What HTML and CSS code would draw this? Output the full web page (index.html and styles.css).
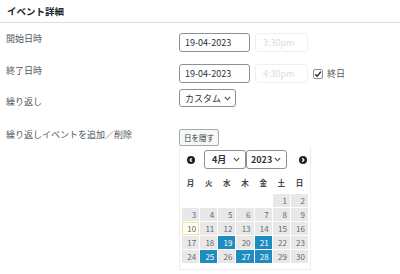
FILE: index.html
```html
<!DOCTYPE html>
<html lang="ja">
<head>
    <meta charset="UTF-8">
    <meta name="viewport" content="width=device-width, initial-scale=1.0">
    <title>イベント詳細</title>
    <link rel="stylesheet" href="styles.css">
</head>
<body>

<!-- Event details box -->
<div class="panel">
    <h2 class="panel-title">イベント詳細</h2>

    <div class="field row-start">
        <label class="field-label">開始日時</label>
        <div class="field-input">
            <input type="text" class="date-input" value="19-04-2023">
            <input type="text" class="time-input" placeholder="3:30pm" disabled>
        </div>
    </div>

    <div class="field row-end">
        <label class="field-label">終了日時</label>
        <div class="field-input">
            <input type="text" class="date-input" value="19-04-2023">
            <input type="text" class="time-input" placeholder="4:30pm" disabled>
            <span class="checkbox">
                <svg width="8" height="8" viewBox="0 0 8 8"><path d="M1.2 4.2 L3.2 6.2 L6.9 1.6" fill="none" stroke="#1d2327" stroke-width="1.3"/></svg>
            </span>
            <span class="checkbox-label">終日</span>
        </div>
    </div>

    <div class="field row-repeat">
        <label class="field-label label-repeat">繰り返し</label>
        <div class="field-input">
            <div class="select select-repeat">
                <span>カスタム</span>
                <svg class="chevron" width="7" height="5" viewBox="0 0 7 5"><path d="M0.8 1 L3.5 3.8 L6.2 1" fill="none" stroke="#50575e" stroke-width="1.1"/></svg>
            </div>
        </div>
    </div>

    <div class="field row-dates">
        <label class="field-label">繰り返しイベントを追加／削除</label>
        <div class="field-input field-stack">
            <button type="button" class="button">日を隠す</button>

            <!-- Date picker -->
            <div class="datepicker">
                <div class="dp-header">
                    <svg class="dp-nav" width="8" height="8" viewBox="0 0 8 8"><circle cx="4" cy="4" r="4" fill="#1d2327"/><path d="M4.8 2.3 L3 4 L4.8 5.7" fill="none" stroke="#fff" stroke-width="1.2"/></svg>
                    <div class="select dp-month">
                        <span>4月</span>
                        <svg class="chevron" width="7" height="5" viewBox="0 0 7 5"><path d="M0.8 1 L3.5 3.8 L6.2 1" fill="none" stroke="#50575e" stroke-width="1.1"/></svg>
                    </div>
                    <div class="select dp-year">
                        <span>2023</span>
                        <svg class="chevron" width="7" height="5" viewBox="0 0 7 5"><path d="M0.8 1 L3.5 3.8 L6.2 1" fill="none" stroke="#50575e" stroke-width="1.1"/></svg>
                    </div>
                    <svg class="dp-nav dp-next" width="8" height="8" viewBox="0 0 8 8"><circle cx="4" cy="4" r="4" fill="#1d2327"/><path d="M3.2 2.3 L5 4 L3.2 5.7" fill="none" stroke="#fff" stroke-width="1.2"/></svg>
                </div>
                <div class="dp-weekdays">
                    <span>月</span><span>火</span><span>水</span><span>木</span><span>金</span><span>土</span><span>日</span>
                </div>
                <div class="dp-days" id="dp-days"></div>
            </div>
        </div>
    </div>
</div>

<script>
    // April 2023 starts on a Saturday (Monday-first grid)
    const selected = [19, 21, 25, 27, 28];
    const today = 10;
    const days = document.getElementById('dp-days');
    let html = '';
    for (let i = 0; i < 5; i++) {
        html += '<span class="dp-empty"></span>';
    }
    for (let d = 1; d <= 30; d++) {
        let cls = 'dp-day';
        if (selected.includes(d)) cls += ' dp-selected';
        if (d === today) cls += ' dp-today';
        html += `<span class="${cls}">${d}</span>`;
    }
    days.innerHTML = html;
</script>

</body>
</html>
```

FILE: styles.css
```css
body {
    margin: 0;
    padding: 0;
    background-color: #fff;
    font-family: "Noto Sans CJK JP", "Noto Sans", sans-serif;
    font-size: 9px;
    color: #50575e;
}
.panel-title {
    margin: 0;
    height: 22px;
    line-height: 22px;
    padding-left: 7px;
    font-size: 9.5px;
    font-weight: bold;
    color: #1d2327;
    border-bottom: 1px solid #dcdcde;
}
.field {
    display: flex;
}
.field-label {
    width: 179px;
    flex-shrink: 0;
    padding-left: 6px;
    box-sizing: border-box;
    line-height: 12px;
}
.field-input {
    display: flex;
    align-items: center;
}
.field-stack {
    flex-direction: column;
    align-items: flex-start;
}
.row-start {
    margin-top: 10px;
}
.row-end {
    margin-top: 12px;
}
.row-end .field-label {
    padding-top: 1px;
}
.row-repeat {
    margin-top: 5px;
}
.label-repeat {
    padding-top: 8px;
}
.row-dates {
    margin-top: 21px;
}
.date-input,
.time-input {
    box-sizing: border-box;
    height: 19px;
    margin: 0;
    font-family: inherit;
    font-size: 9px;
    border-radius: 3px;
    outline: none;
}
.date-input {
    width: 71px;
    padding: 0 5px;
    border: 1px solid #8c8f94;
    color: #2c3338;
    background-color: #fff;
}
.time-input {
    width: 53px;
    margin-left: 5px;
    padding: 0 7px;
    border: 1px solid #f0f0f1;
    background-color: #fff;
}
.time-input::placeholder {
    color: #dcdcde;
}
.checkbox {
    box-sizing: border-box;
    width: 10px;
    height: 10px;
    margin-left: 5px;
    border: 1px solid #8c8f94;
    border-radius: 2px;
    display: flex;
    align-items: center;
    justify-content: center;
}
.checkbox-label {
    margin-left: 4px;
}
.select {
    box-sizing: border-box;
    display: flex;
    align-items: center;
    justify-content: space-between;
    white-space: nowrap;
    border: 1px solid #8c8f94;
    border-radius: 3px;
    background-color: #fff;
    color: #2c3338;
}
.select-repeat {
    width: 57px;
    height: 18px;
    padding: 0 4px 0 5px;
    font-size: 9px;
}
.button {
    box-sizing: border-box;
    width: 40px;
    height: 17px;
    padding: 0;
    font-family: inherit;
    font-size: 7.5px;
    color: #2c3338;
    background-color: #f6f7f7;
    border: 1px solid #a7aaad;
    border-radius: 2px;
}
.datepicker {
    box-sizing: border-box;
    width: 132px;
    padding: 4px 2px 6px 2px;
    border: 1px solid #eeeeee;
    border-top: none;
    background-color: #fff;
}
.dp-header {
    display: flex;
    align-items: center;
    height: 19px;
    padding-left: 5px;
}
.dp-month {
    width: 42px;
    height: 19px;
    margin-left: 9px;
    padding: 0 5px 0 7px;
    font-size: 9px;
    font-weight: bold;
}
.dp-year {
    width: 41px;
    height: 19px;
    padding: 0 5px 0 4px;
    font-size: 9px;
    font-weight: bold;
}
.dp-next {
    margin-left: 12px;
}
.dp-weekdays {
    display: grid;
    grid-template-columns: repeat(7, 1fr);
    gap: 1px;
    margin-top: 8px;
    height: 12px;
    line-height: 12px;
    text-align: center;
    font-size: 7.5px;
    font-weight: bold;
    color: #3c434a;
}
.dp-days {
    display: grid;
    grid-template-columns: repeat(7, 1fr);
    grid-auto-rows: 13px;
    gap: 1px;
    margin-top: 5px;
}
.dp-day {
    box-sizing: border-box;
    background-color: #e8e8e8;
    color: #646970;
    font-size: 8px;
    line-height: 13px;
    text-align: right;
    padding-right: 3px;
}
.dp-selected {
    background-color: #1e8cbe;
    color: #fff;
}
.dp-today {
    background-color: #fffdf2;
    border: 1px solid #eee3a8;
    line-height: 11px;
    padding-right: 2px;
}
```
